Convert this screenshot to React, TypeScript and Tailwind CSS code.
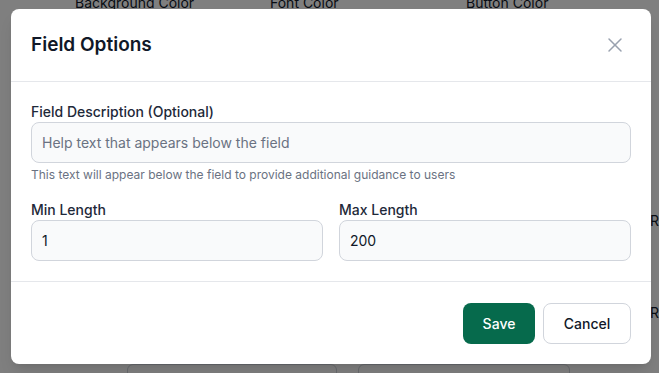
import React from "react";
import { X } from "lucide-react";

export default function App() {
  return (
    <div
      className="relative w-[659px] h-[373px] overflow-hidden bg-white"
      style={{ fontFamily: "Inter, 'Noto Sans', sans-serif" }}
    >
      {/* background page */}
      <div className="flex flex-col">
        <div className="mt-[-7px] flex pl-[75px] text-sm leading-5 text-gray-900">
          <div className="w-[195px]">Background Color</div>
          <div className="w-[196px]">Font Color</div>
          <div>Button Color</div>
        </div>
        <div className="mt-[198px] pl-[650px] text-sm leading-5 text-gray-900">Re</div>
        <div className="mt-[72px] pl-[650px] text-sm leading-5 text-gray-900">Re</div>
        <div className="mt-[41px] flex gap-[21px] pl-[127px]">
          <div className="h-[30px] w-[210px] rounded-md border border-gray-300 bg-white" />
          <div className="h-[30px] w-[212px] rounded-md border border-gray-300 bg-white" />
        </div>
      </div>

      {/* overlay */}
      <div className="absolute inset-0 bg-black/50">
        <div className="ml-[11px] mt-[9px] w-[640px] rounded-lg bg-white shadow-lg">
          <div className="flex items-center justify-between border-b border-gray-200 px-5 py-[22px]">
            <h2 className="text-[19px] leading-7 font-semibold text-gray-900">Field Options</h2>
            <button className="mr-1 text-gray-400">
              <X size={24} strokeWidth={1.5} />
            </button>
          </div>

          <div className="px-5 pt-5 pb-5">
            <label className="block text-sm leading-5 font-medium text-gray-800">
              Field Description (Optional)
            </label>
            <input
              className="block h-[41px] w-full rounded-lg border border-gray-300 bg-gray-50 px-[10px] text-sm text-gray-900 placeholder:text-gray-500 outline-none"
              placeholder="Help text that appears below the field"
            />
            <p className="mt-1 text-xs leading-4 text-gray-500">
              This text will appear below the field to provide additional guidance to users
            </p>

            <div className="mt-[17px] grid grid-cols-2 gap-4">
              <div>
                <label className="block text-sm leading-5 font-medium text-gray-800">Min Length</label>
                <input
                  className="block h-[41px] w-full rounded-lg border border-gray-300 bg-gray-50 px-[10px] text-sm text-gray-900 outline-none"
                  defaultValue="1"
                />
              </div>
              <div>
                <label className="block text-sm leading-5 font-medium text-gray-800">Max Length</label>
                <input
                  className="block h-[41px] w-full rounded-lg border border-gray-300 bg-gray-50 px-[10px] text-sm text-gray-900 outline-none"
                  defaultValue="200"
                />
              </div>
            </div>
          </div>

          <div className="flex justify-end gap-2 border-t border-gray-200 px-5 pt-[21px] pb-5">
            <button className="h-[41px] w-[72px] rounded-lg bg-[#066a4c] text-sm font-medium text-white">
              Save
            </button>
            <button className="h-[41px] w-[88px] rounded-lg border border-gray-300 bg-white text-sm font-medium text-gray-900">
              Cancel
            </button>
          </div>
        </div>
      </div>
    </div>
  );
}
